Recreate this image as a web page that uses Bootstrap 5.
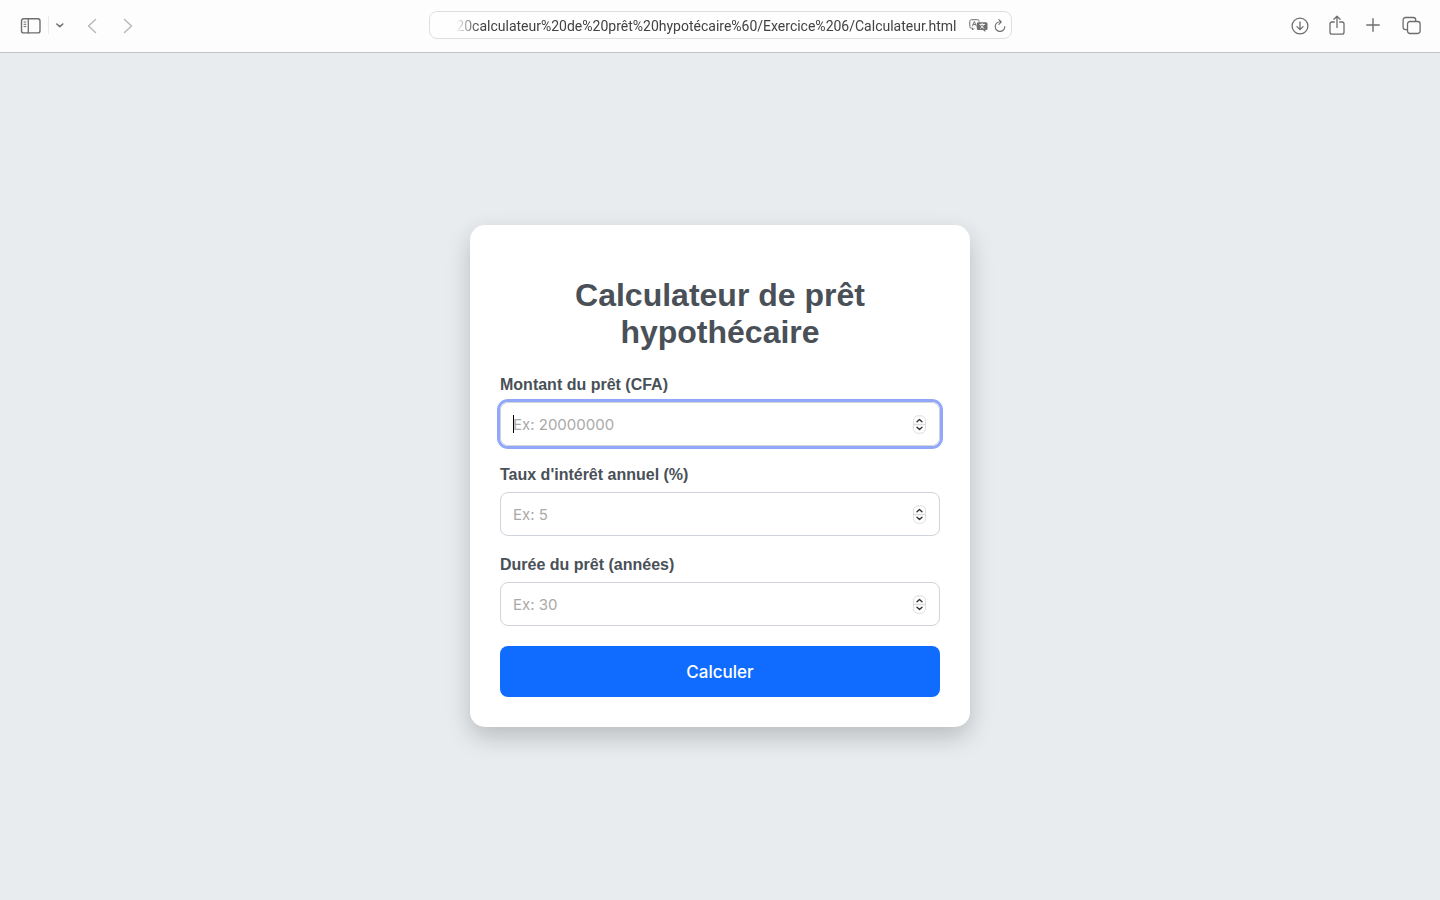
<!DOCTYPE html>
<html lang="fr">
<head>
<meta charset="utf-8">
<meta name="viewport" content="width=device-width, initial-scale=1">
<title>Calculateur de prêt hypothécaire</title>
<link href="https://cdn.jsdelivr.net/npm/bootstrap@5.3.0/dist/css/bootstrap.min.css" rel="stylesheet">
<style>
  body { background: #e8ecef; font-family: Inter, "Liberation Sans", sans-serif; color: #495057; }
  .toolbar { height: 53px; padding: 0 18px 2px; background: #fdfdfd; border-bottom: 1px solid #bfc3c7; }
  .toolbar-side { flex: 1 1 0; }
  .tool { display: flex; padding: 1px 0 0; border: 0; background: none; color: #6e6e6e; }
  .tool svg, .spin svg { fill: none; stroke: currentColor; stroke-linecap: round; stroke-linejoin: round; }
  .tool svg { overflow: visible; }
  .tool-muted { color: #b9b9b9; }
  .tool-rule { width: 1px; height: 18px; background: #ececec; }
  .tools-end { gap: 21px; }
  .address { flex: 0 1 583px; height: 28px; padding: 0 4px 0 12px; border: 1px solid #dfdfdf; border-radius: 8px; background: #fefefe; }
  .address input { min-width: 0; padding: 2px 0 0; border: 0; outline: 0; background: none; color: #424242; font: 14px/20px Roboto, "Liberation Sans", sans-serif;
    -webkit-mask-image: linear-gradient(90deg, transparent 14px, #000 36px); mask-image: linear-gradient(90deg, transparent 14px, #000 36px); }
  .address .tool { padding-top: 2px; }
  .calc { max-width: 500px; padding: 52px 30px 30px; border: 0; border-radius: 15px; box-shadow: 0 10px 25px rgba(0,0,0,.2); }
  .calc-area { padding-bottom: 2px; }
  .calc h1 { margin-bottom: 25px; font: bold 32px/37px "Liberation Sans", Arial, sans-serif; color: #495057; }
  .calc label { margin-bottom: 8px; font: bold 16px/18px "Liberation Sans", Arial, sans-serif; }
  .field { height: 44px; margin-bottom: 20px; padding: 0 13px 0 12px; border: 1px solid #ced4da; border-radius: 8px; }
  .field input { min-width: 0; height: 42px; padding: 2px 0 0; border: 0; outline: 0; background: none; font-size: 15px; appearance: textfield; -moz-appearance: textfield; caret-color: transparent; }
  .field input::placeholder { color: #a9a9a9; opacity: 1; }
  .field input::-webkit-inner-spin-button { -webkit-appearance: none; margin: 0; }
  .field-active { box-shadow: 0 0 0 3px #91a7fa; }
  .text-caret { left: 12px; top: 12px; width: 1px; height: 18px; background: #000; }
  .spin { padding-top: 1px; color: #333; }
  .btn-calc { height: 51px; padding: 3px 12px 0; border: 0; border-radius: 8px; background: #0f6cff; color: #fff; font-size: 17px; font-weight: 500; }
</style>
</head>
<body class="d-flex flex-column min-vh-100">
<header class="toolbar d-flex align-items-center">
  <div class="toolbar-side d-flex align-items-center">
    <button class="tool ms-1 me-2" type="button" aria-label="Barre latérale">
      <svg width="18" height="16" viewBox="0 0 18 16"><rect x="-.5" y=".7" width="18.5" height="14.2" rx="2.2" stroke-width="1.4"/><path d="M6.3 1v14" stroke-width="1.3"/><path d="M2 4h1.8M2 6.3h1.8M2 8.6h1.8" stroke-width="1"/></svg>
    </button>
    <span class="tool-rule me-2"></span>
    <button class="tool" type="button" aria-label="Groupes d’onglets">
      <svg width="7" height="5" viewBox="0 0 7 5"><path d="M-.2 1L2.8 3.6 5.8 1" stroke-width="1.5"/></svg>
    </button>
    <button class="tool tool-muted ms-4" type="button" aria-label="Précédent">
      <svg width="10" height="16" viewBox="1 0 10 16"><path d="M8.5 1.5L1.5 8l7 6.5" stroke-width="1.5"/></svg>
    </button>
    <button class="tool tool-muted ms-4" type="button" aria-label="Suivant">
      <svg width="12" height="16" viewBox="-2 0 12 16"><path d="M.5 1.5l7 6.5-7 6.5" stroke-width="1.5"/></svg>
    </button>
  </div>
  <div class="address d-flex align-items-center">
    <input class="w-100 text-end" type="text" aria-label="Adresse" value="%20calculateur%20de%20prêt%20hypotécaire%60/Exercice%206/Calculateur.html">
    <button class="tool ms-2" type="button" aria-label="Traduire">
      <svg width="24" height="16" viewBox="-4 0 24 16"><path d="M5 10.5L3.5 12v-1.8H2.4A1.6 1.6 0 0 1 .8 8.6V3.3c0-.9.7-1.6 1.6-1.6h6.2c.9 0 1.6.7 1.6 1.6" stroke-width="1"/><path d="M3.5 8l1.9-4.5L7.3 8M4.2 6.5h2.4" stroke-width=".9"/><path d="M9.5 4.2h7.3c1 0 1.7.7 1.7 1.7v4.5c0 1-.7 1.7-1.7 1.7h-.5v1.9L14 12.1H9.5c-1 0-1.7-.7-1.7-1.7V5.9c0-1 .7-1.7 1.7-1.7z" fill="currentColor" stroke="none"/><path d="M10.7 6.4h5M13.2 5.5v.9M11.5 10.3c1.5-.8 2.7-2 3.1-3.7M11.7 7.2c.7 1.6 1.8 2.5 3.2 3.1" stroke="#fff" stroke-width=".9"/></svg>
    </button>
    <button class="tool ms-1" type="button" aria-label="Actualiser">
      <svg width="14" height="14" viewBox="0 0 14 14"><path d="M7 2.8A4.8 4.8 0 1 0 11.8 7.6M5.8.6L8.3 2.9 5.9 5.3" stroke-width="1.1"/></svg>
    </button>
  </div>
  <div class="toolbar-side tools-end d-flex align-items-center justify-content-end">
    <button class="tool" type="button" aria-label="Téléchargements">
      <svg width="18" height="18" viewBox="0 0 18 18"><circle cx="9" cy="9" r="7.9" stroke-width="1.3"/><path d="M9 5v7.4M6 9.6l3 3 3-3" stroke-width="1.3"/></svg>
    </button>
    <button class="tool" type="button" aria-label="Partager">
      <svg width="16" height="20" viewBox="1 1 16 20"><path d="M5.3 7H3a2 2 0 0 0-2 2v8.2a2 2 0 0 0 2 2h10a2 2 0 0 0 2-2V9a2 2 0 0 0-2-2h-2.3M8 12.4V1.5M4.9 4.3L8 1.3l3.1 3" stroke-width="1.3"/></svg>
    </button>
    <button class="tool" type="button" aria-label="Nouvel onglet">
      <svg width="14" height="14" viewBox="1 1 14 14"><path d="M7 .8v12.4M.8 7h12.4" stroke-width="1.4"/></svg>
    </button>
    <button class="tool" type="button" aria-label="Vue des onglets">
      <svg width="20" height="18" viewBox="0 0 20 18"><rect x="5.5" y="4.5" width="12.6" height="12" rx="2.4" stroke-width="1.3"/><path d="M5 12.7H3.5a2.4 2.4 0 0 1-2.4-2.4V2.9A2.4 2.4 0 0 1 3.5.5h7.8a2.4 2.4 0 0 1 2.4 2.4v1" stroke-width="1.3"/></svg>
    </button>
  </div>
</header>
<main class="calc-area flex-grow-1 d-flex align-items-center justify-content-center">
  <form class="calc card w-100">
    <h1 class="text-center">Calculateur de prêt hypothécaire</h1>
    <label for="montant">Montant du prêt (CFA)</label>
    <div class="field field-active position-relative d-flex align-items-center">
      <input class="flex-grow-1" id="montant" type="number" placeholder="Ex: 20000000">
      <span class="text-caret position-absolute"></span>
      <span class="spin d-flex"><svg width="13" height="19" viewBox="0 0 13 19"><rect x=".5" y=".8" width="12" height="17.4" rx="4.5" stroke="#dedede"/><path d="M1 9.5h11" stroke="#ddd" stroke-width="1.6"/><path d="M4 6.8l2.5-2.3L9 6.8M4 12.2l2.5 2.3L9 12.2" stroke-width="1.4"/></svg></span>
    </div>
    <label for="taux">Taux d'intérêt annuel (%)</label>
    <div class="field d-flex align-items-center">
      <input class="flex-grow-1" id="taux" type="number" placeholder="Ex: 5">
      <span class="spin d-flex"><svg width="13" height="19" viewBox="0 0 13 19"><rect x=".5" y=".8" width="12" height="17.4" rx="4.5" stroke="#dedede"/><path d="M1 9.5h11" stroke="#ddd" stroke-width="1.6"/><path d="M4 6.8l2.5-2.3L9 6.8M4 12.2l2.5 2.3L9 12.2" stroke-width="1.4"/></svg></span>
    </div>
    <label for="duree">Durée du prêt (années)</label>
    <div class="field d-flex align-items-center">
      <input class="flex-grow-1" id="duree" type="number" placeholder="Ex: 30">
      <span class="spin d-flex"><svg width="13" height="19" viewBox="0 0 13 19"><rect x=".5" y=".8" width="12" height="17.4" rx="4.5" stroke="#dedede"/><path d="M1 9.5h11" stroke="#ddd" stroke-width="1.6"/><path d="M4 6.8l2.5-2.3L9 6.8M4 12.2l2.5 2.3L9 12.2" stroke-width="1.4"/></svg></span>
    </div>
    <button class="btn btn-primary btn-calc w-100" type="button">Calculer</button>
  </form>
</main>
<script src="https://cdn.jsdelivr.net/npm/bootstrap@5.3.0/dist/js/bootstrap.bundle.min.js"></script>
</body>
</html>
